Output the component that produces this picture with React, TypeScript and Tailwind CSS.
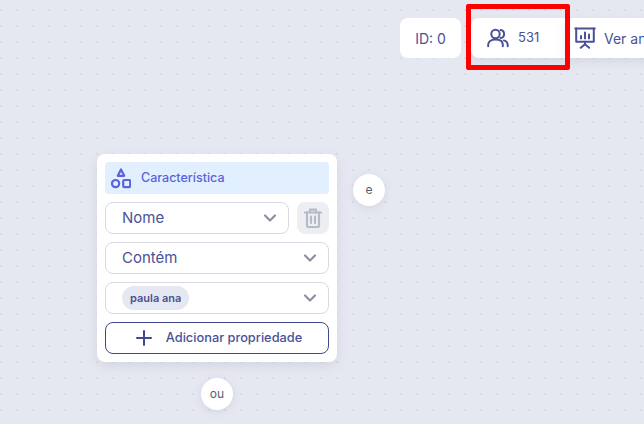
import { ChevronDown, Plus } from "lucide-react";

const font = "font-['Inter','Open_Sans',sans-serif]";

const UsersIcon = () => (
  <svg width="22" height="20" viewBox="0 0 22 20" fill="none" stroke="#4a5296" strokeWidth="2" strokeLinecap="round" strokeLinejoin="round">
    <circle cx="8.5" cy="6" r="4.2" />
    <path d="M1.2 18.2v-1.4c0-3.2 2.6-5.2 7.3-5.2s7.3 2 7.3 5.2v1.4" />
    <path d="M13.5 1.9c2.2.3 3.6 2 3.6 4.1s-1.4 3.8-3.6 4.1" />
    <path d="M16.8 12.4c2.4.7 3.9 2.3 3.9 4.6v1.2" />
  </svg>
);

const BoardIcon = () => (
  <svg width="22" height="22" viewBox="0 0 22 22" fill="none" stroke="#4a5296" strokeWidth="2" strokeLinecap="round" strokeLinejoin="round">
    <path d="M1.2 1.5h19.6" />
    <path d="M2.2 1.5v13.2h17.6V1.5" />
    <path d="M7 11.5V9M11 11.5V5.5M15 11.5V7.5" />
    <path d="M11 14.7v3M11 17.2l-4.2 3.6M11 17.2l4.2 3.6" />
  </svg>
);

const ShapesIcon = () => (
  <svg width="20" height="21" viewBox="0 0 20 21" fill="none" stroke="#5a63d8" strokeWidth="2.2" strokeLinejoin="round">
    <path d="M10 1.5l3.2 6.3H6.8z" />
    <circle cx="4.6" cy="15.6" r="3.6" />
    <rect x="12.2" y="12" width="7" height="7.2" rx="1.2" />
  </svg>
);

const TrashIcon = () => (
  <svg width="18" height="20" viewBox="0 0 18 20" fill="none" stroke="#b6b9c6" strokeWidth="2.1" strokeLinecap="round" strokeLinejoin="round">
    <path d="M1 4.5h16" />
    <path d="M6 4.5V1.6h6v2.9" />
    <path d="M3 4.5v13.2c0 .8.6 1.3 1.3 1.3h9.4c.7 0 1.3-.5 1.3-1.3V4.5" />
    <path d="M7 8.5v6.5M11 8.5v6.5" />
  </svg>
);

function SelectBox({ children, className = "" }: { children: React.ReactNode; className?: string }) {
  return (
    <div className={`flex h-8 items-center justify-between rounded-lg border border-[#d8d9e2] bg-white pl-4 pr-[8px] ${className}`}>
      {children}
      <ChevronDown size={20} strokeWidth={2.6} className="text-[#8b8fa3]" />
    </div>
  );
}

function Connector({ label, className }: { label: string; className: string }) {
  return (
    <div className={`absolute flex h-8 w-8 items-center justify-center rounded-full bg-white text-[12px] text-[#5a5d70] shadow-[0_2px_8px_rgba(70,75,110,0.12)] ${className}`}>
      {label}
    </div>
  );
}

export default function App() {
  return (
    <div
      className={`relative h-[424px] w-[644px] overflow-hidden bg-[#e6e8f1] bg-[radial-gradient(#d9dbe5_1px,transparent_1px)] bg-[size:16px_16px] bg-[position:-7px_2px] ${font}`}
    >
      {/* top toolbar */}
      <div className="absolute left-[400px] top-[18px] flex h-10 text-[14px] text-[#4a5296]">
        <div className="flex w-[61px] items-center justify-center rounded-lg bg-white">ID: 0</div>
        <div className="ml-[10px] flex w-[94px] items-center rounded-l-lg bg-white pl-[16px] shadow-[0_4px_10px_rgba(70,75,110,0.1)]">
          <UsersIcon />
          <span className="ml-[9px] text-[13px]">531</span>
        </div>
        <div className="flex w-[120px] items-center bg-white pl-[9px] shadow-[0_4px_10px_rgba(70,75,110,0.1)]">
          <BoardIcon />
          <span className="ml-[8px] whitespace-nowrap">Ver análise</span>
        </div>
      </div>

      {/* red highlight */}
      <div className="absolute left-[466px] top-[4px] h-[66px] w-[104px] rounded-[2px] border-[5px] border-[#ff0000]" />

      {/* filter node */}
      <div className="absolute left-[97px] top-[154px] flex w-[240px] flex-col gap-2 rounded-lg bg-white p-2 shadow-[0_4px_12px_rgba(70,75,110,0.12)]">
        <div className="flex h-8 items-center rounded bg-[#e2effe] pl-[6px] text-[12.5px] font-medium text-[#5a63d8]">
          <ShapesIcon />
          <span className="ml-[10px]">Característica</span>
        </div>
        <div className="flex gap-2">
          <SelectBox className="w-[184px] text-[15px] text-[#4a5296]">Nome</SelectBox>
          <button className="flex h-8 w-8 items-center justify-center rounded-lg bg-[#eceef2]">
            <TrashIcon />
          </button>
        </div>
        <SelectBox className="text-[15px] text-[#4a5296]">Contém</SelectBox>
        <SelectBox>
          <span className="flex h-6 items-center rounded-full bg-[#e6e8f1] px-2 text-[11px] font-semibold text-[#4a5296]">paula ana</span>
        </SelectBox>
        <button className="flex h-8 items-center justify-center rounded-lg border border-[#3f4791] bg-white text-[12.8px] font-medium text-[#4a5296]">
          <Plus size={24} strokeWidth={2} className="mr-[10px] text-[#3f4791]" />
          Adicionar propriedade
        </button>
      </div>

      <Connector label="e" className="left-[353px] top-[174px]" />
      <Connector label="ou" className="left-[201px] top-[378px]" />
    </div>
  );
}
